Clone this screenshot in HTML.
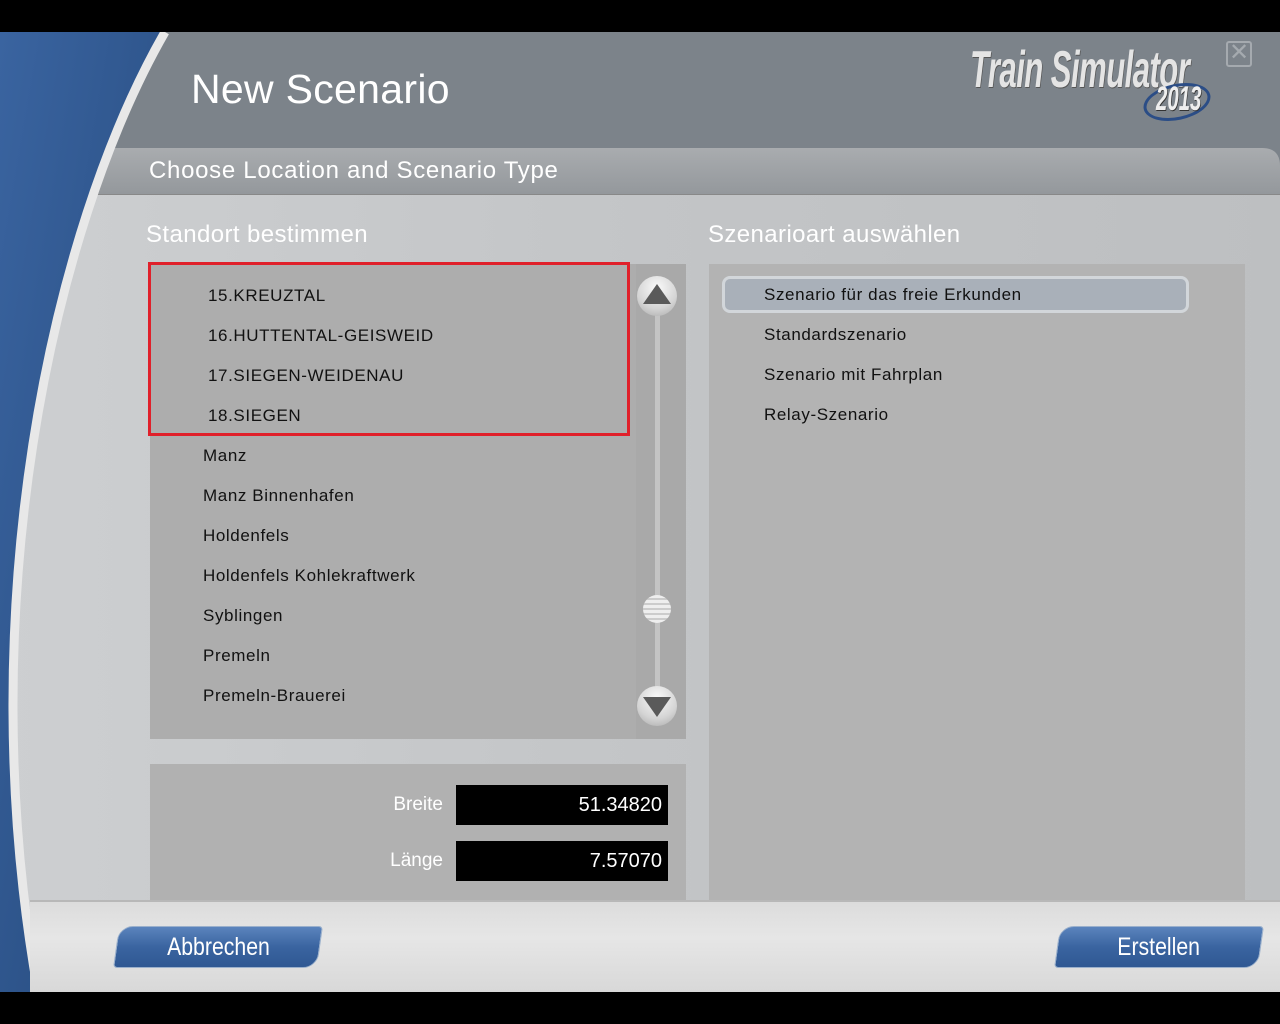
<!DOCTYPE html>
<html><head><meta charset="utf-8"><style>
*{margin:0;padding:0;box-sizing:border-box}
body{width:1280px;height:1024px;background:#000;position:relative;overflow:hidden;font-family:"Liberation Sans",Arial,sans-serif}
.abs{position:absolute;white-space:nowrap}
.t{color:#fff}
.item{position:absolute;font-size:17px;color:#111;letter-spacing:0.6px;white-space:nowrap}
.btn{position:absolute;top:926px;height:42px;background:linear-gradient(#5b84bd,#3a64a0 50%,#2f5893);border:1px solid #9ab0cc;border-radius:14px 4px 14px 4px;color:#fff;font-size:25px;text-align:center;line-height:40px;transform:skewX(-8deg)}
.btn span{display:inline-block;transform:skewX(8deg) scaleX(0.85)}
.ball{position:absolute;left:637px;width:40px;height:40px;border-radius:50%;background:radial-gradient(circle at 50% 30%,#fafafa,#d4d4d4 60%,#a8a8a8)}
</style></head><body>
<svg class="abs" style="left:0;top:32px" width="1280" height="960">
<defs>
<linearGradient id="bl" x1="0" y1="0" x2="1" y2="1"><stop offset="0" stop-color="#3a64a0"/><stop offset="1" stop-color="#24487a"/></linearGradient>
</defs>
<rect width="1280" height="960" fill="url(#bl)"/>
<path d="M165,0 C50,200 -30,580 38,960 L1280,960 L1280,0 Z" fill="#7c838a"/>
</svg>
<div class="abs" style="left:0;top:148px;width:1280px;height:760px;clip-path:path('M118,0 L1262,0 Q1280,0 1280,18 L1280,760 L0,760 L0,0 Z')">
 <div class="abs" style="left:0;top:0;width:1280px;height:47px;background:linear-gradient(#a9acaf,#94989c);border-bottom:1px solid #888"></div>
 <div class="abs" style="left:0;top:47px;width:1280px;height:713px;background:linear-gradient(90deg,#cdcfd1,#c3c5c7 50%,#bdbfc1)"></div>
</div>
<svg class="abs" style="left:0;top:32px" width="200" height="960"><defs><linearGradient id="bl2" x1="0" y1="0" x2="1" y2="1"><stop offset="0" stop-color="#3a64a0"/><stop offset="1" stop-color="#24487a"/></linearGradient></defs><path d="M165,0 C50,200 -30,580 38,960 L0,960 L0,0Z" fill="url(#bl2)"/><path d="M165,0 C50,200 -30,580 38,960" stroke="#e8e8e8" stroke-width="9" fill="none"/></svg>
<div class="abs" style="left:30px;top:900px;width:1250px;height:92px;background:linear-gradient(#dcdcdc,#e6e6e6 40%,#d8d8d8);border-top:2px solid #b8b8b8"></div>
<div class="abs t" style="left:191px;top:66px;font-size:41px;letter-spacing:0.3px">New Scenario</div>
<div class="abs t" style="left:149px;top:157px;font-size:24px;letter-spacing:0.7px">Choose Location and Scenario Type</div>
<div class="abs" style="left:970px;top:40px;font-size:52px;font-style:italic;font-weight:bold;color:#e4e4e4;transform:scaleX(0.6);transform-origin:left;letter-spacing:-1px;text-shadow:1px 1px 0 #555">Train Simulator</div>
<div class="abs" style="left:1143px;top:84px;width:68px;height:36px;border-radius:50%;border:3px solid #2b4d86;transform:rotate(-12deg)"></div>
<div class="abs" style="left:1156px;top:80px;font-size:34px;font-style:italic;font-weight:bold;color:#eee;transform:scaleX(0.6);transform-origin:left;text-shadow:1px 1px 0 #333">2013</div>
<div class="abs" style="left:1226px;top:41px;width:26px;height:26px;border:2px solid #a5aaaf;border-radius:3px;color:#a5aaaf;font-size:24px;line-height:20px;text-align:center">✕</div>
<div class="abs t" style="left:146px;top:221px;font-size:24px;letter-spacing:0.4px">Standort bestimmen</div>
<div class="abs t" style="left:708px;top:221px;font-size:24px;letter-spacing:0.4px">Szenarioart auswählen</div>
<div class="abs" style="left:150px;top:264px;width:536px;height:475px;background:#adadad"></div>
<div class="abs" style="left:636px;top:264px;width:50px;height:475px;background:#a9a9a9"></div>
<div class="abs" style="left:655px;top:310px;width:5px;height:390px;background:#c4c4c4;border-radius:2px"></div>
<div class="ball" style="top:276px"></div>
<div class="abs" style="left:643px;top:284px;width:0;height:0;border-left:14px solid transparent;border-right:14px solid transparent;border-bottom:20px solid #5a5a5a"></div>
<div class="ball" style="top:686px"></div>
<div class="abs" style="left:643px;top:697px;width:0;height:0;border-left:14px solid transparent;border-right:14px solid transparent;border-top:20px solid #5a5a5a"></div>
<div class="abs" style="left:643px;top:595px;width:28px;height:28px;border-radius:50%;background:repeating-linear-gradient(#eee 0 3px,#ccc 3px 5px)"></div>
<div class="abs" style="left:148px;top:262px;width:482px;height:174px;border:3px solid #e0202a"></div>
<div class="item" style="left:208px;top:286px">15.KREUZTAL</div>
<div class="item" style="left:208px;top:326px">16.HUTTENTAL-GEISWEID</div>
<div class="item" style="left:208px;top:366px">17.SIEGEN-WEIDENAU</div>
<div class="item" style="left:208px;top:406px">18.SIEGEN</div>
<div class="item" style="left:203px;top:446px">Manz</div>
<div class="item" style="left:203px;top:486px">Manz Binnenhafen</div>
<div class="item" style="left:203px;top:526px">Holdenfels</div>
<div class="item" style="left:203px;top:566px">Holdenfels Kohlekraftwerk</div>
<div class="item" style="left:203px;top:606px">Syblingen</div>
<div class="item" style="left:203px;top:646px">Premeln</div>
<div class="item" style="left:203px;top:686px">Premeln-Brauerei</div>
<div class="abs" style="left:150px;top:764px;width:536px;height:136px;background:#b1b1b1"></div>
<div class="abs t" style="left:300px;top:794px;width:143px;text-align:right;font-size:19px">Breite</div>
<div class="abs t" style="left:456px;top:785px;width:212px;height:40px;background:#000;text-align:right;padding-right:6px;line-height:40px;font-size:20px">51.34820</div>
<div class="abs t" style="left:300px;top:850px;width:143px;text-align:right;font-size:19px">Länge</div>
<div class="abs t" style="left:456px;top:841px;width:212px;height:40px;background:#000;text-align:right;padding-right:6px;line-height:40px;font-size:20px">7.57070</div>
<div class="abs" style="left:709px;top:264px;width:536px;height:636px;background:#b3b3b3"></div>
<div class="abs" style="left:722px;top:276px;width:467px;height:37px;background:#a9b0b9;border:3px solid #d2d6da;border-radius:8px"></div>
<div class="item" style="left:764px;top:285px">Szenario für das freie Erkunden</div>
<div class="item" style="left:764px;top:325px">Standardszenario</div>
<div class="item" style="left:764px;top:365px">Szenario mit Fahrplan</div>
<div class="item" style="left:764px;top:405px">Relay-Szenario</div>
<div class="btn" style="left:116px;width:204px"><span>Abbrechen</span></div>
<div class="btn" style="left:1057px;width:204px"><span>Erstellen</span></div>
</body></html>
